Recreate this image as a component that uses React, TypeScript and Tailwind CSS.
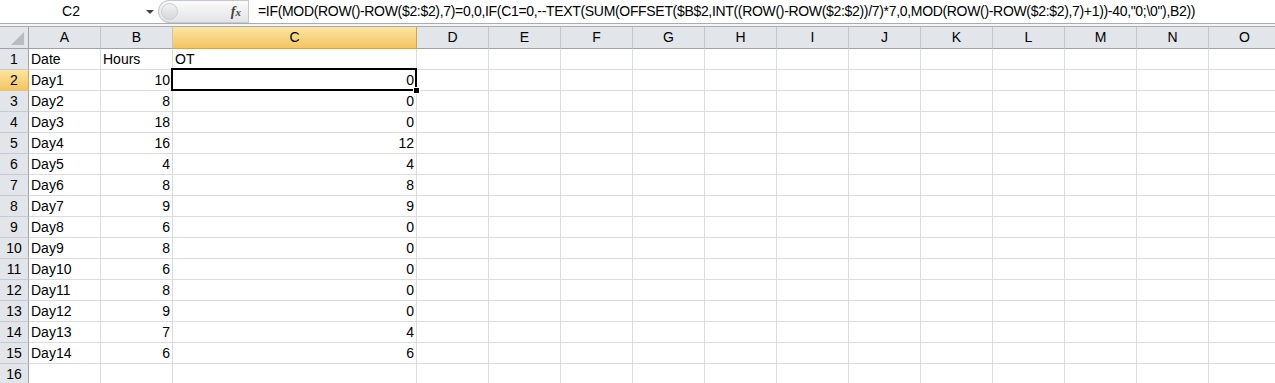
import React from "react"

const COLS = [
  { l: "A", w: "w-[72px]" },
  { l: "B", w: "w-[72px]" },
  { l: "C", w: "w-[244px]" },
  { l: "D", w: "w-[72px]" },
  { l: "E", w: "w-[72px]" },
  { l: "F", w: "w-[72px]" },
  { l: "G", w: "w-[72px]" },
  { l: "H", w: "w-[72px]" },
  { l: "I", w: "w-[72px]" },
  { l: "J", w: "w-[72px]" },
  { l: "K", w: "w-[72px]" },
  { l: "L", w: "w-[72px]" },
  { l: "M", w: "w-[72px]" },
  { l: "N", w: "w-[72px]" },
  { l: "O", w: "w-[72px]" },
]

const ROWS: (string | number)[][] = [
  ["Date", "Hours", "OT"],
  ["Day1", 10, 0],
  ["Day2", 8, 0],
  ["Day3", 18, 0],
  ["Day4", 16, 12],
  ["Day5", 4, 4],
  ["Day6", 8, 8],
  ["Day7", 9, 9],
  ["Day8", 6, 0],
  ["Day9", 8, 0],
  ["Day10", 6, 0],
  ["Day11", 8, 0],
  ["Day12", 9, 0],
  ["Day13", 7, 4],
  ["Day14", 6, 6],
  [],
]

const FORMULA =
  '=IF(MOD(ROW()-ROW($2:$2),7)=0,0,IF(C1=0,--TEXT(SUM(OFFSET($B$2,INT((ROW()-ROW($2:$2))/7)*7,0,MOD(ROW()-ROW($2:$2),7)+1))-40,"0;\\0"),B2))'

function FormulaBar() {
  return (
    <div className="flex h-[23px] items-stretch bg-white">
      {/* name box */}
      <div className="relative flex w-[158px] shrink-0 items-center justify-center pr-[8px]">
        <span className="pr-[8px] text-[14px]">C2</span>
        <span className="absolute right-[4px] top-[10px] h-0 w-0 border-x-[4px] border-t-[4px] border-x-transparent border-t-[#444]" />
      </div>
      {/* grip + fx */}
      <div className="flex w-[90px] shrink-0 items-center justify-between rounded-l-full border border-r-0 border-[#c5c8cc] bg-gradient-to-b from-[#fbfbfb] to-[#e3e4e6] pl-[2px] pr-[7px]">
        <span className="h-[17px] w-[17px] rounded-full border border-[#c9cbce] bg-gradient-to-b from-[#f2f2f2] to-[#d7d8da]" />
        <span className="font-['Liberation_Serif',serif] text-[14px] font-bold italic text-[#444]">
          f<span className="text-[11px]">x</span>
        </span>
      </div>
      <div className="flex flex-1 items-center overflow-hidden whitespace-nowrap border-l border-[#c5c8cc] pl-[9px] text-[14px] tracking-[-0.32px]">
        {FORMULA}
      </div>
    </div>
  )
}

function ColumnHeader() {
  return (
    <div className="flex h-[22px]">
      <div className="relative w-[29px] shrink-0 border-r border-b border-[#9fa3a8] bg-[#e2e5e9]">
        <svg className="absolute bottom-[3px] right-[4px]" width="13" height="13" viewBox="0 0 13 13">
          <polygon points="13,0 13,13 0,13" fill="#b8bcc1" />
        </svg>
      </div>
      {COLS.map((c) =>
        c.l === "C" ? (
          <div
            key={c.l}
            className={`${c.w} flex shrink-0 items-center justify-center border-r border-b border-[#e0a33a] bg-gradient-to-b from-[#fce59f] to-[#f3c562] text-[14px]`}
          >
            {c.l}
          </div>
        ) : (
          <div
            key={c.l}
            className={`${c.w} flex shrink-0 items-center justify-center border-r border-b border-r-[#c3c7cc] border-b-[#9fa3a8] bg-[#e2e5e9] text-[14px]`}
          >
            {c.l}
          </div>
        ),
      )}
    </div>
  )
}

export default function App() {
  return (
    <div className="h-[383px] w-[1275px] overflow-hidden bg-white font-['Liberation_Sans',Arial,sans-serif] text-black">
      <FormulaBar />
      <div className="h-[4px] border-t border-b border-[#a9adb2] bg-[#f4f5f6]" />
      <ColumnHeader />
      {ROWS.map((r, i) => (
        <div key={i} className="flex h-[21px]">
          <div
            className={
              i === 1
                ? "flex w-[29px] shrink-0 items-center justify-center border-r border-b border-r-[#e0a33a] border-b-[#e5c27a] bg-gradient-to-b from-[#fce59f] to-[#f3c562] text-[14px]"
                : "flex w-[29px] shrink-0 items-center justify-center border-r border-b border-r-[#9fa3a8] border-b-[#c7cbd0] bg-[#e2e5e9] text-[14px]"
            }
          >
            {i + 1}
          </div>
          {COLS.map((c, j) => {
            const v = r[j]
            const num = typeof v === "number"
            return (
              <div
                key={c.l}
                className={`${c.w} relative flex shrink-0 items-center border-r border-b border-[#dadcdd] text-[14px] ${
                  num ? "justify-end pr-[2px]" : "justify-start pl-[2px]"
                }`}
              >
                {v}
                {i === 1 && c.l === "C" && (
                  <div className="pointer-events-none absolute -left-[2px] -top-[2px] bottom-[-1px] right-[-1px] z-10 border-2 border-black">
                    <span className="absolute -bottom-[5px] -right-[5px] h-[7px] w-[7px] border border-white bg-black" />
                  </div>
                )}
              </div>
            )
          })}
        </div>
      ))}
    </div>
  )
}
